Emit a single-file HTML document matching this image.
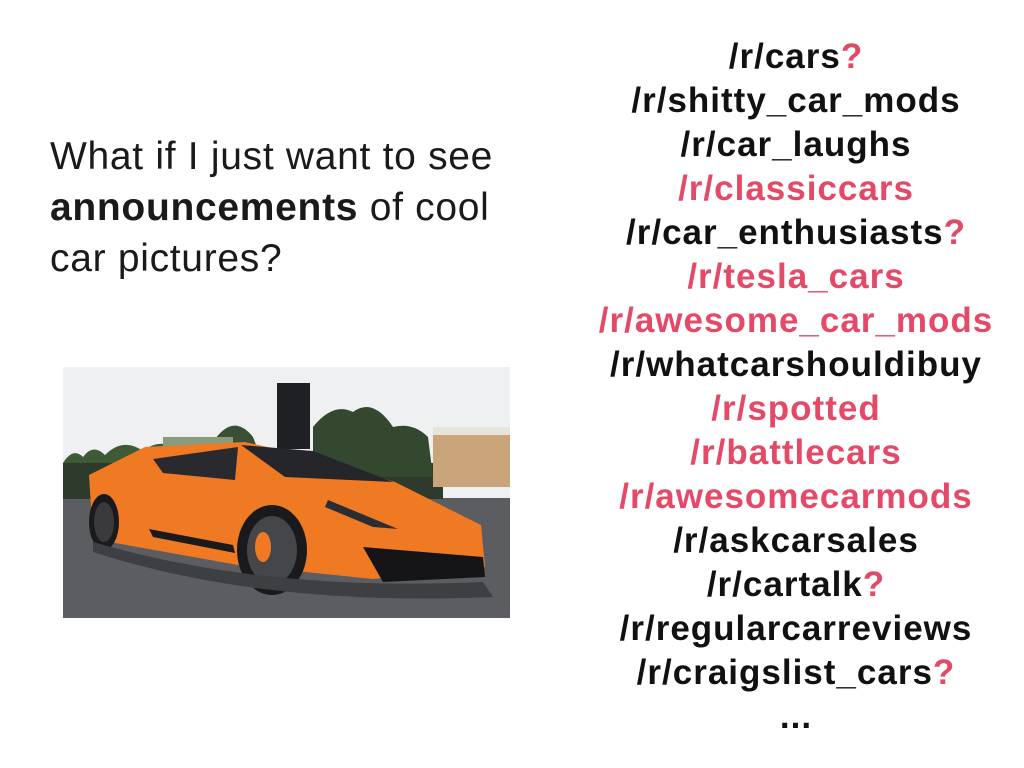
<!DOCTYPE html>
<html><head><style>
body{margin:0;width:1024px;height:768px;background:#fff;position:relative;overflow:hidden;font-family:"Liberation Sans",sans-serif}
.l{position:absolute;left:50px;top:131px;font-size:39px;line-height:51px;color:#1a1a1a;letter-spacing:0.7px;white-space:nowrap}
.r{position:absolute;left:546px;width:500px;top:35px;text-align:center;font-size:35px;font-weight:bold;line-height:44px;color:#111;letter-spacing:1px;white-space:nowrap}
.p{color:#e44a68}
svg{position:absolute;left:63px;top:367px}
</style></head><body>
<div class="l">What if I just want to see<br><b>announcements</b> of cool<br>car pictures?</div>
<div class="r">/r/cars<span class="p">?</span><br>/r/shitty_car_mods<br>/r/car_laughs<br><span class="p">/r/classiccars</span><br>/r/car_enthusiasts<span class="p">?</span><br><span class="p">/r/tesla_cars</span><br><span class="p">/r/awesome_car_mods</span><br>/r/whatcarshouldibuy<br><span class="p">/r/spotted</span><br><span class="p">/r/battlecars</span><br><span class="p">/r/awesomecarmods</span><br>/r/askcarsales<br>/r/cartalk<span class="p">?</span><br>/r/regularcarreviews<br>/r/craigslist_cars<span class="p">?</span><br>...</div>
<svg width="447" height="251" viewBox="0 0 447 251">
<rect width="447" height="251" fill="#eef0f2"/>
<rect x="0" y="131" width="447" height="120" fill="#5c5d60"/>
<rect x="0" y="96" width="380" height="36" fill="#2e3a2c"/>
<path d="M0 96 Q10 80 20 90 Q30 76 42 88 Q60 70 80 84 Q95 72 110 80 L120 96Z" fill="#3f5a36"/>
<path d="M150 75 Q170 45 190 70 L200 96 L150 96Z" fill="#3a4f33"/>
<path d="M250 60 Q270 35 290 45 Q310 30 330 60 Q350 55 365 70 L370 110 L250 110Z" fill="#34482f"/>
<rect x="370" y="60" width="77" height="60" fill="#caa57a"/>
<rect x="370" y="60" width="77" height="8" fill="#e8e4dc"/>
<rect x="214" y="16" width="33" height="66" fill="#1f2023"/>
<rect x="100" y="70" width="70" height="12" fill="#8a9a7e"/>
<path d="M26 108 L82 80 L182 75 L250 90 L332 115 L418 158 L422 200 L310 212 L175 198 L30 172 Z" fill="#f07a24"/>
<path d="M90 92 L175 80 L172 113 L100 106Z" fill="#2a2a2e"/>
<path d="M178 78 L250 84 L330 115 L222 110Z" fill="#25262a"/>
<path d="M300 180 L420 190 L422 210 L320 215Z" fill="#151517"/>
<path d="M265 133 L335 162 L310 160 L262 140Z" fill="#2b2d35"/>
<path d="M86 162 L170 178 L172 186 L90 170Z" fill="#1a1a1a"/>
<ellipse cx="41" cy="155" rx="15" ry="28" fill="#1a1a1c"/>
<ellipse cx="41" cy="155" rx="10" ry="20" fill="#3a3a3c"/>
<ellipse cx="209" cy="183" rx="35" ry="45" fill="#1a1a1c"/>
<ellipse cx="209" cy="183" rx="25" ry="34" fill="#44464a"/>
<ellipse cx="200" cy="180" rx="8" ry="15" fill="#f07a24"/>
<path d="M30 175 Q200 225 420 215 L430 230 Q200 240 30 185Z" fill="#3e3f42"/>
</svg>
</body></html>
